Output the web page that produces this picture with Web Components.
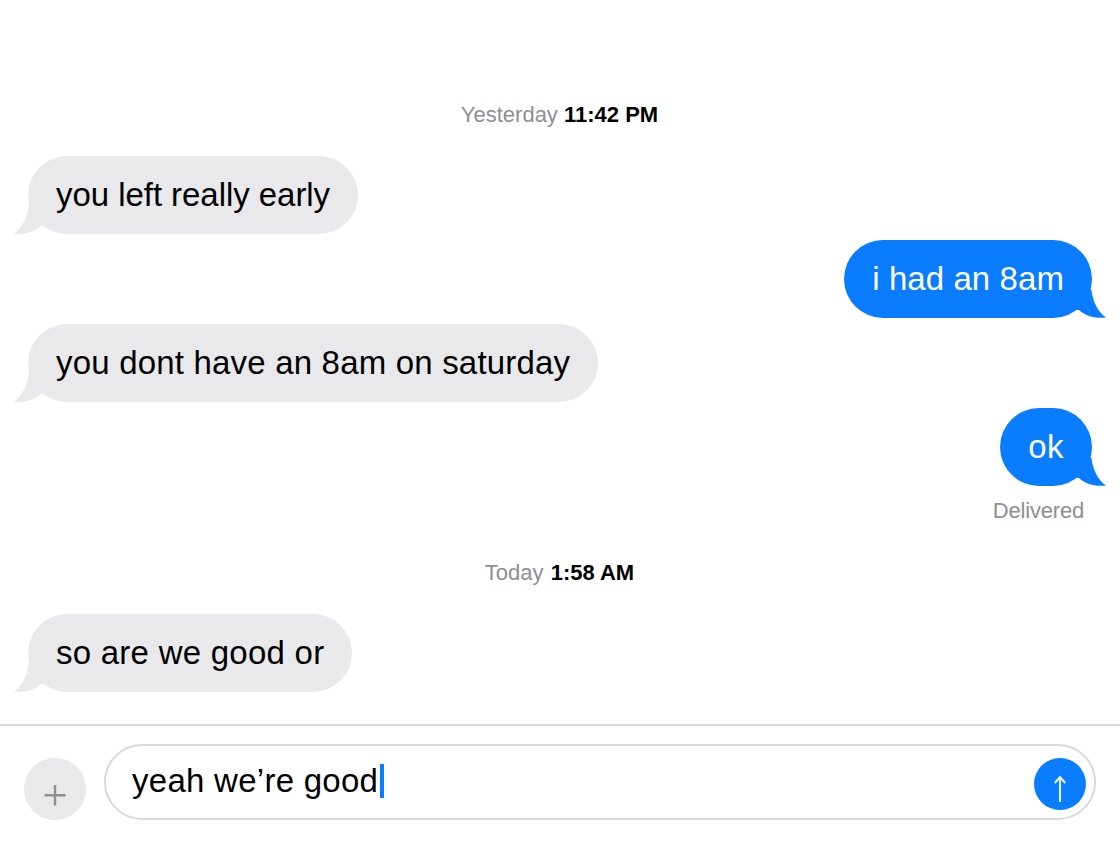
<!DOCTYPE html>
<html><head><meta charset="utf-8"><style>
html,body{margin:0;padding:0;background:#fff;width:1120px;height:852px;overflow:hidden;font-family:"Liberation Sans",Arial,sans-serif}
</style></head><body>
<imsg-app>
<imsg-thread>
<imsg-stamp day="Yesterday" time="11:42 PM"></imsg-stamp>
<imsg-bubble from="them" style="margin-top:30px;letter-spacing:-.05px">you left really early</imsg-bubble>
<imsg-bubble from="me" style="margin-top:6px;letter-spacing:.08px">i had an 8am</imsg-bubble>
<imsg-bubble from="them" style="margin-top:6px;letter-spacing:.19px">you dont have an 8am on saturday</imsg-bubble>
<imsg-bubble from="me" style="margin-top:6px;letter-spacing:.5px">ok</imsg-bubble>
<imsg-status>Delivered</imsg-status>
<imsg-stamp day="Today" time="1:58 AM" style="margin-top:39px;--gap:1px"></imsg-stamp>
<imsg-bubble from="them" style="margin-top:30px;letter-spacing:.25px">so are we good or</imsg-bubble>
</imsg-thread>
<imsg-composer style="letter-spacing:.27px">yeah we’re good</imsg-composer>
</imsg-app>
<script>
function def(name,html,init){customElements.define(name,class extends HTMLElement{connectedCallback(){if(this.shadowRoot)return;const s=this.attachShadow({mode:'open'});s.innerHTML=html;if(init)init(this,s);}});}
def('imsg-app',`<style>:host{display:flex;flex-direction:column;width:1120px;height:852px;box-sizing:border-box}</style><slot></slot>`);
def('imsg-thread',`<style>:host{display:flex;flex-direction:column;height:724px;box-sizing:border-box;padding-top:104px}</style><slot></slot>`);
def('imsg-stamp',`<style>:host{display:block;text-align:center;font-size:22px;line-height:22px;color:#8e8e93;padding-right:1px}b{color:#000;font-weight:700;margin-left:var(--gap,0)}</style><span id="d"></span> <b id="t"></b>`,(h,s)=>{s.getElementById('d').textContent=h.getAttribute('day');s.getElementById('t').textContent=h.getAttribute('time');});
def('imsg-status',`<style>:host{display:block;text-align:right;font-size:22px;line-height:24px;color:#8e8e93;letter-spacing:-.2px;padding:13px 36px 0 0}</style><slot></slot>`);
def('imsg-bubble',`<style>
:host{display:flex;font-size:33px}
:host([from=them]){justify-content:flex-start;padding-left:28px}
:host([from=me]){justify-content:flex-end;padding-right:28px}
.b{position:relative;height:78px;line-height:78px;padding:0 28px;border-radius:39px;white-space:nowrap}
:host([from=them]) .b{background:#e9e9eb;color:#000}
:host([from=me]) .b{background:#0a7cff;color:#fff}
svg{position:absolute;bottom:0;width:34px;height:24px;overflow:visible}
:host([from=them]) svg{left:-14px;fill:#e9e9eb}
:host([from=me]) svg{right:-14px;fill:#0a7cff;transform:scaleX(-1)}
</style><div class="b"><svg viewBox="0 0 34 24"><path d="M14.500 -4 C13.500 6 9 17 0 23.700 C9 24.300 19 23.500 27 16 L42 14 L30 -10 Z"/></svg><slot></slot></div>`);
def('imsg-composer',`<style>
:host{display:flex;align-items:flex-end;box-sizing:border-box;height:128px;border-top:2px solid #d9d9d9;padding:18px 24px 32px 24px;gap:18px}
.plus{width:62px;height:62px;flex:none;border-radius:50%;background:#e9e9eb}
.plus svg{display:block}
.field{position:relative;flex:1;height:76px;box-sizing:border-box;border:2px solid #d9d9d9;border-radius:38px;padding:0 0 2px 26px;display:flex;align-items:center;font-size:33px;color:#000}
.caret{display:inline-block;width:4px;height:34px;background:#0a7cff;margin-left:2px}
.send{position:absolute;right:8px;top:12px;width:52px;height:52px;border-radius:50%;background:#0a7cff}
.send svg{display:block}
</style>
<div class="plus"><svg width="62" height="62" viewBox="0 0 62 62"><path d="M31 27V47.500M20.500 37.300H41.500" stroke="#8e8e93" stroke-width="2.400" fill="none"/></svg></div>
<div class="field"><slot></slot><span class="caret"></span>
<div class="send"><svg width="52" height="52" viewBox="0 0 52 52"><path d="M26 44V19.500M20.800 25L26 19L31.200 25" stroke="#fff" stroke-width="2" fill="none" opacity=".92"/></svg></div></div>`);
</script>
</body></html>
